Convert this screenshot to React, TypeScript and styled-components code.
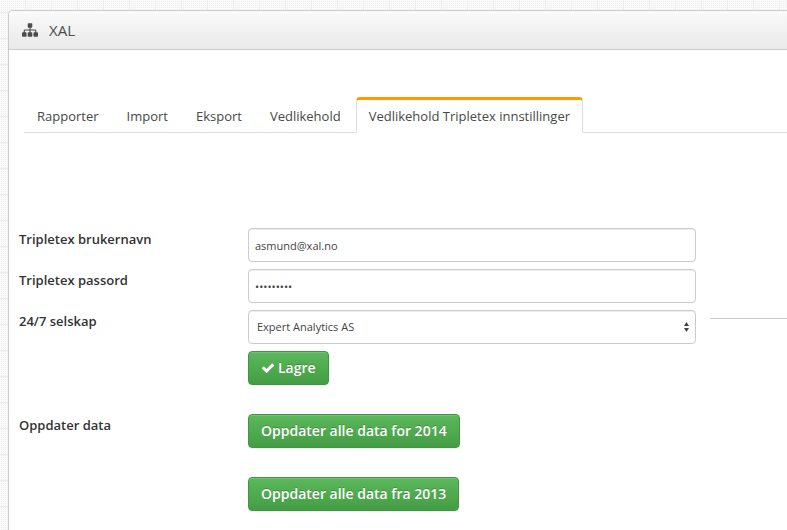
import React, { useState } from "react";
import styled, { createGlobalStyle, css } from "styled-components";

const GlobalStyle = createGlobalStyle`
  *, *::before, *::after { box-sizing: border-box; }
  body {
    margin: 0;
    min-height: 100vh;
    font: 13px/20px "Open Sans", "Liberation Sans", sans-serif;
    color: #333;
    background-color: #fafafa;
    background-image:
      linear-gradient(#ececec 1px, transparent 1px),
      linear-gradient(90deg, #ececec 1px, transparent 1px),
      linear-gradient(#fafafa 1px, transparent 1px),
      linear-gradient(90deg, #fafafa 1px, #eeeeee 1px);
    background-size: 26px 26px, 26px 26px, 2px 2px, 2px 2px;
    background-position: -1px 12px, -1px 12px, 0 0, 0 0;
  }
`;

const Page = styled.div`
  padding: 10px 0 0 8px;
`;

const Panel = styled.main`
  min-height: calc(100vh - 10px);
  border: 1px solid #ccc;
  border-width: 1px 0 0 1px;
  border-radius: 5px 0 0 0;
  background: #fff;
`;

const PanelHeader = styled.header`
  display: flex;
  align-items: center;
  gap: 11px;
  height: 39px;
  padding: 0 13px;
  border-bottom: 1px solid #ccc;
  border-radius: 4px 0 0 0;
  background: linear-gradient(#fafafa, #e9e9e9);
  color: #4c4c4c;
`;

const Title = styled.h1`
  margin: 0;
  font-size: 15px;
  font-weight: 400;
  line-height: 20px;
`;

const Tabs = styled.nav`
  display: flex;
  align-items: flex-end;
  gap: 2px;
  margin: 47px 0 0 15px;
  border-bottom: 1px solid #ddd;
`;

const Tab = styled.a<{ $active?: boolean }>`
  height: 36px;
  margin-bottom: -1px;
  padding: 8px 12px;
  border: 1px solid transparent;
  border-radius: 4px 4px 0 0;
  color: #484848;
  line-height: 20px;
  text-decoration: none;
  white-space: nowrap;
  ${({ $active }) =>
    $active &&
    css`
      border-color: #ddd #ddd #fff;
      border-top: 3px solid #f90;
      padding-top: 6px;
      background: #fff;
    `}
`;

const Form = styled.form`
  display: grid;
  gap: 7px;
  padding: 95px 0 18px 10px;
`;

const Row = styled.div<{ $spaced?: boolean }>`
  display: grid;
  grid-template-columns: 229px minmax(0, 448px) minmax(0, 1fr);
  margin-top: ${({ $spaced }) => ($spaced ? "22px" : "0")};
`;

const labelStyle = css`
  padding-top: 1px;
  font-weight: 600;
`;

const Label = styled.label`
  ${labelStyle}
`;

const Caption = styled.span`
  ${labelStyle}
`;

const controlStyle = css`
  display: block;
  width: 100%;
  height: 34px;
  border: 1px solid #ccc;
  border-radius: 4px;
  background: #fff;
  box-shadow: inset 0 1px 1px rgba(0, 0, 0, 0.075);
  color: #444;
  font-family: inherit;
  font-size: 11px;
  line-height: 16px;
`;

const Input = styled.input`
  ${controlStyle}
  padding: 6px;
`;

const SelectBox = styled.div`
  position: relative;
`;

const Select = styled.select`
  ${controlStyle}
  appearance: none;
  padding: 6px 24px 6px 8px;
`;

const Arrows = styled.svg`
  position: absolute;
  top: 12px;
  right: 7px;
  fill: #444;
  pointer-events: none;
`;

const Rule = styled.hr`
  width: calc(100% - 14px);
  height: 1px;
  margin: 8px 0 0 14px;
  border: 0;
  background: #ccc;
`;

const Actions = styled.div`
  grid-column: 2;
  display: flex;
  flex-direction: column;
  align-items: flex-start;
  gap: 29px;
`;

const Button = styled.button`
  display: flex;
  align-items: center;
  gap: 3px;
  height: 34px;
  padding: 0 12px;
  border: 1px solid #419641;
  border-radius: 4px;
  background: linear-gradient(#5cb85c, #449d44);
  box-shadow: inset 0 1px 0 rgba(255, 255, 255, 0.15), 0 1px 1px rgba(0, 0, 0, 0.075);
  color: #fff;
  font-family: inherit;
  font-size: 14px;
  font-weight: 600;
  line-height: 20px;
  text-shadow: 0 -1px 0 rgba(0, 0, 0, 0.2);
  white-space: nowrap;
  cursor: pointer;
`;

const SitemapIcon = () => (
  <svg width="16" height="16" viewBox="0 0 1792 1792" fill="currentColor" aria-hidden="true">
    <path d="M1792 1248v320q0 40-28 68t-68 28h-320q-40 0-68-28t-28-68v-320q0-40 28-68t68-28h96v-192h-512v192h96q40 0 68 28t28 68v320q0 40-28 68t-68 28h-320q-40 0-68-28t-28-68v-320q0-40 28-68t68-28h96v-192h-512v192h96q40 0 68 28t28 68v320q0 40-28 68t-68 28h-320q-40 0-68-28t-28-68v-320q0-40 28-68t68-28h96v-192q0-52 38-90t90-38h512v-192h-96q-40 0-68-28t-28-68v-320q0-40 28-68t68-28h320q40 0 68 28t28 68v320q0 40-28 68t-68 28h-96v192h512q52 0 90 38t38 90v192h96q40 0 68 28t28 68z" />
  </svg>
);

const CheckIcon = () => (
  <svg width="14" height="14" viewBox="0 0 1792 1792" fill="currentColor" aria-hidden="true">
    <path d="M1671 566q0 40-28 68l-724 724-136 136q-28 28-68 28t-68-28l-136-136-362-362q-28-28-28-68t28-68l136-136q28-28 68-28t68 28l294 295 656-657q28-28 68-28t68 28l136 136q28 28 28 68z" />
  </svg>
);

const tabs = ["Rapporter", "Import", "Eksport", "Vedlikehold", "Vedlikehold Tripletex innstillinger"];

export default function App() {
  const [username, setUsername] = useState("asmund@xal.no");
  const [password, setPassword] = useState("tripletex");

  return (
    <Page>
      <GlobalStyle />
      <Panel>
        <PanelHeader>
          <SitemapIcon />
          <Title>XAL</Title>
        </PanelHeader>
        <Tabs>
          {tabs.map((name, index) => {
            const active = index === tabs.length - 1;
            return (
              <Tab key={name} href="#" $active={active} aria-current={active ? "page" : undefined}>
                {name}
              </Tab>
            );
          })}
        </Tabs>
        <Form onSubmit={(event) => event.preventDefault()}>
          <Row>
            <Label htmlFor="username">Tripletex brukernavn</Label>
            <Input id="username" value={username} onChange={(e) => setUsername(e.target.value)} />
          </Row>
          <Row>
            <Label htmlFor="password">Tripletex passord</Label>
            <Input
              id="password"
              type="password"
              value={password}
              onChange={(e) => setPassword(e.target.value)}
            />
          </Row>
          <Row>
            <Label htmlFor="company">24/7 selskap</Label>
            <SelectBox>
              <Select id="company">
                <option>Expert Analytics AS</option>
              </Select>
              <Arrows width="5" height="10" viewBox="0 0 5 10" aria-hidden="true">
                <path d="M2.5 0L5 4H0zM2.5 10L5 6H0z" />
              </Arrows>
            </SelectBox>
            <Rule />
          </Row>
          <Row>
            <Actions>
              <Button type="submit">
                <CheckIcon />
                Lagre
              </Button>
            </Actions>
          </Row>
          <Row $spaced>
            <Caption>Oppdater data</Caption>
            <Actions>
              <Button type="button">Oppdater alle data for 2014</Button>
              <Button type="button">Oppdater alle data fra 2013</Button>
            </Actions>
          </Row>
        </Form>
      </Panel>
    </Page>
  );
}
